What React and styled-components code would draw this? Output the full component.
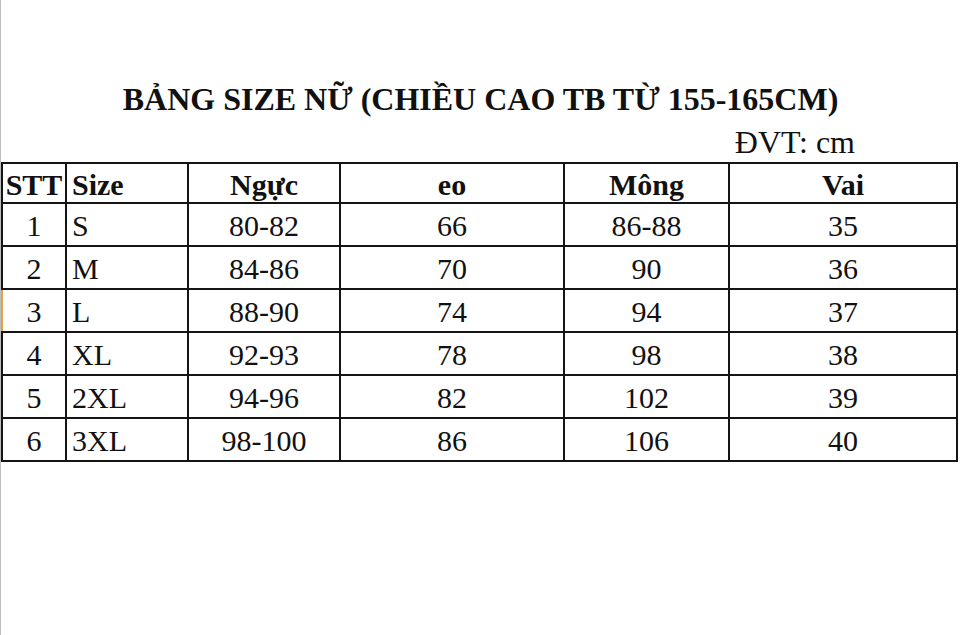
import React from "react";
import styled, { createGlobalStyle } from "styled-components";

const Global = createGlobalStyle`
  html, body { margin: 0; padding: 0; background: #ffffff; }
  body { font-family: "Liberation Serif", "Times New Roman", serif; color: #111; }
`;

const Page = styled.div`
  box-sizing: border-box;
  width: 960px;
  height: 635px;
  border-left: 1px solid #bdbdbd;
  background: #fff;
  overflow: hidden;
`;

const Title = styled.h1`
  margin: 0;
  padding-top: 81px;
  height: 36px;
  line-height: 36px;
  font-size: 32px;
  font-weight: bold;
  text-align: center;
  color: #111;
`;

const Unit = styled.div`
  margin-top: 7px;
  height: 38px;
  line-height: 36px;
  font-size: 32px;
  text-align: right;
  padding-right: 105px;
`;

const Table = styled.table`
  border-collapse: collapse;
  table-layout: fixed;
  width: 955px;
  font-size: 30px;
  color: #111;
`;

const Cell = styled.td`
  border: 2px solid #151515;
  height: ${(p) => (p.$head ? 35 : 38)}px;
  padding: 3px 0 0 ${(p) => (p.$align === "left" ? "5px" : "0")};
  text-align: ${(p) => p.$align || "center"};
  vertical-align: middle;
  line-height: 34px;
  font-weight: ${(p) => (p.$head ? "bold" : "normal")};
  white-space: nowrap;
  position: relative;
`;

const Marker = styled.span`
  position: absolute;
  left: -2px;
  top: 0;
  bottom: 0;
  width: 2px;
  background: #e5a43a;
`;

const cols = [64, 122, 152, 224, 165, 228];
const head = ["STT", "Size", "Ngực", "eo", "Mông", "Vai"];
const rows = [
  ["1", "S", "80-82", "66", "86-88", "35"],
  ["2", "M", "84-86", "70", "90", "36"],
  ["3", "L", "88-90", "74", "94", "37"],
  ["4", "XL", "92-93", "78", "98", "38"],
  ["5", "2XL", "94-96", "82", "102", "39"],
  ["6", "3XL", "98-100", "86", "106", "40"],
];

export default function App() {
  return (
    <>
      <Global />
      <Page>
        <Title>BẢNG SIZE NỮ (CHIỀU CAO TB TỪ 155-165CM)</Title>
        <Unit>ĐVT: cm</Unit>
        <Table>
          <colgroup>
            {cols.map((w, i) => (
              <col key={i} style={{ width: w }} />
            ))}
          </colgroup>
          <thead>
            <tr>
              {head.map((h, i) => (
                <Cell as="th" key={h} $head $align={i === 1 ? "left" : "center"}>
                  {h}
                </Cell>
              ))}
            </tr>
          </thead>
          <tbody>
            {rows.map((r, ri) => (
              <tr key={ri}>
                {r.map((c, ci) => (
                  <Cell key={ci} $align={ci === 1 ? "left" : "center"}>
                    {ri === 2 && ci === 0 && <Marker />}
                    {c}
                  </Cell>
                ))}
              </tr>
            ))}
          </tbody>
        </Table>
      </Page>
    </>
  );
}
